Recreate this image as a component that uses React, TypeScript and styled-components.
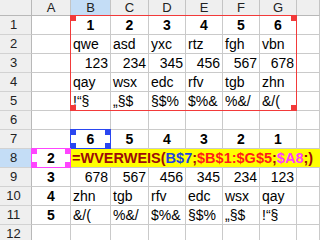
import styled, { createGlobalStyle } from 'styled-components';

const GlobalStyle = createGlobalStyle`
    html, body {
        margin: 0;
        padding: 0;
        background: #ffffff;
        overflow: hidden;
    }
    body {
        font-family: "Liberation Sans", Arial, sans-serif;
    }
`

const Sheet = styled.div`
    display: grid;
    grid-template-columns: 32px 39px 40px 38px 37px 37px 37px 37px 1fr;
    grid-template-rows: 16px repeat(12, 19px);
    width: 320px;
    height: 240px;
    overflow: hidden;
    background: #ffffff;
`

type Place = { $r: number; $c: number };

const Corner = styled.div`
    grid-row: 1;
    grid-column: 1;
    background: #efefef;
    border-right: 1px solid #b8b8b8;
    border-bottom: 1px solid #b8b8b8;
`

const ColHeader = styled.div<Place & { $active?: boolean }>`
    grid-row: ${p => p.$r};
    grid-column: ${p => p.$c};
    background: ${p => (p.$active ? '#c4ddf6' : '#efefef')};
    border-right: 1px solid #c4c4c4;
    border-bottom: 1px solid #b8b8b8;
    font-size: 13px;
    line-height: 15px;
    color: #222;
    text-align: center;
`

const RowHeader = styled.div<Place & { $active?: boolean }>`
    grid-row: ${p => p.$r};
    grid-column: ${p => p.$c};
    background: ${p => (p.$active ? '#c4ddf6' : '#efefef')};
    border-right: 1px solid #b8b8b8;
    border-bottom: 1px solid #d2d2d2;
    font-size: 13px;
    line-height: 18px;
    color: #222;
    text-align: center;
    padding-right: 4px;
`

type Align = 'left' | 'center' | 'right';

const Cell = styled.div<Place & { $align: Align; $bold?: boolean }>`
    grid-row: ${p => p.$r};
    grid-column: ${p => p.$c};
    border-right: 1px solid #cacaca;
    border-bottom: 1px solid #cacaca;
    padding: 0 2px;
    font-size: 14px;
    line-height: 18px;
    font-weight: ${p => (p.$bold ? 700 : 400)};
    text-align: ${p => p.$align};
    white-space: nowrap;
    overflow: hidden;
    color: #000;
`

const FormulaCell = styled.div<Place>`
    grid-row: ${p => p.$r};
    grid-column: ${p => p.$c} / -1;
    border-bottom: 1px solid #cacaca;
    background: #ffff00;
    padding-left: 1px;
    font-size: 14.5px;
    line-height: 18px;
    font-weight: 700;
    white-space: nowrap;
    overflow: hidden;
    color: #9c0a0a;
`

const Ref = styled.span<{ $color: string }>`
    color: ${p => p.$color};
`

const Frame = styled.div<{ $rows: string; $cols: string; $color: string }>`
    grid-row: ${p => p.$rows};
    grid-column: ${p => p.$cols};
    margin: -1px 0 0 -1px;
    border: 1px solid ${p => p.$color};
    position: relative;
    z-index: 2;
    pointer-events: none;
    color: ${p => p.$color};
`

const Handle = styled.span<{ $v: 'top' | 'bottom'; $h: 'left' | 'right' }>`
    position: absolute;
    ${p => p.$v}: -1px;
    ${p => p.$h}: -1px;
    width: 6px;
    height: 6px;
    background: currentColor;
`

const Handles = () => (
    <>
        <Handle $v="top" $h="left" />
        <Handle $v="top" $h="right" />
        <Handle $v="bottom" $h="left" />
        <Handle $v="bottom" $h="right" />
    </>
)

const columns = ['A', 'B', 'C', 'D', 'E', 'F', 'G', ''];

interface IRow {
    cells: string[];
    align: Align;
    bold?: boolean;
}

// rows 1..12, values for B..G (A handled separately)
const rows: IRow[] = [
    { cells: ['1', '2', '3', '4', '5', '6'], align: 'center', bold: true },
    { cells: ['qwe', 'asd', 'yxc', 'rtz', 'fgh', 'vbn'], align: 'left' },
    { cells: ['123', '234', '345', '456', '567', '678'], align: 'right' },
    { cells: ['qay', 'wsx', 'edc', 'rfv', 'tgb', 'zhn'], align: 'left' },
    { cells: ['!\u201C\u00A7', '\u201E\u00A7$', '\u00A7$%', '$%&', '%&/', '&/('], align: 'left' },
    { cells: ['', '', '', '', '', ''], align: 'left' },
    { cells: ['6', '5', '4', '3', '2', '1'], align: 'center', bold: true },
    { cells: [], align: 'left' },
    { cells: ['678', '567', '456', '345', '234', '123'], align: 'right' },
    { cells: ['zhn', 'tgb', 'rfv', 'edc', 'wsx', 'qay'], align: 'left' },
    { cells: ['&/(', '%&/', '$%&', '\u00A7$%', '\u201E\u00A7$', '!\u201C\u00A7'], align: 'left' },
    { cells: ['', '', '', '', '', ''], align: 'left' },
];

const keys: Record<number, string> = { 8: '2', 9: '3', 10: '4', 11: '5' };

export default function App() {
    return (
        <>
            <GlobalStyle />
            <Sheet>
                <Corner />
                {columns.map((c, i) => (
                    <ColHeader key={'h' + i} $r={1} $c={i + 2} $active={c === 'B'}>{c}</ColHeader>
                ))}
                {rows.map((row, ri) => {
                    const r = ri + 2;
                    const n = ri + 1;
                    return [
                        <RowHeader key={'rh' + n} $r={r} $c={1} $active={n === 8}>{n}</RowHeader>,
                        <Cell key={'a' + n} $r={r} $c={2} $align="center" $bold>{keys[n] ?? ''}</Cell>,
                        n === 8 ? (
                            <FormulaCell key="formula" $r={r} $c={3}>
                                =WVERWEIS(<Ref $color="#1f3fe0">B$7</Ref>;<Ref $color="#ff1a1a">$B$1:$G$5</Ref>;<Ref $color="#ff3cff">$A8</Ref>;)
                            </FormulaCell>
                        ) : (
                            [
                                ...row.cells.map((v, ci) => (
                                    <Cell key={n + '-' + ci} $r={r} $c={ci + 3} $align={row.align} $bold={row.bold}>{v}</Cell>
                                )),
                                <Cell key={n + '-h'} $r={r} $c={9} $align="left" />,
                            ]
                        ),
                    ];
                })}
                <Frame $rows="2 / 7" $cols="3 / 9" $color="#f23a3a"><Handles /></Frame>
                <Frame $rows="8 / 9" $cols="3 / 4" $color="#2a46f0"><Handles /></Frame>
                <Frame $rows="9 / 10" $cols="2 / 3" $color="#ff44ff"><Handles /></Frame>
            </Sheet>
        </>
    );
}
